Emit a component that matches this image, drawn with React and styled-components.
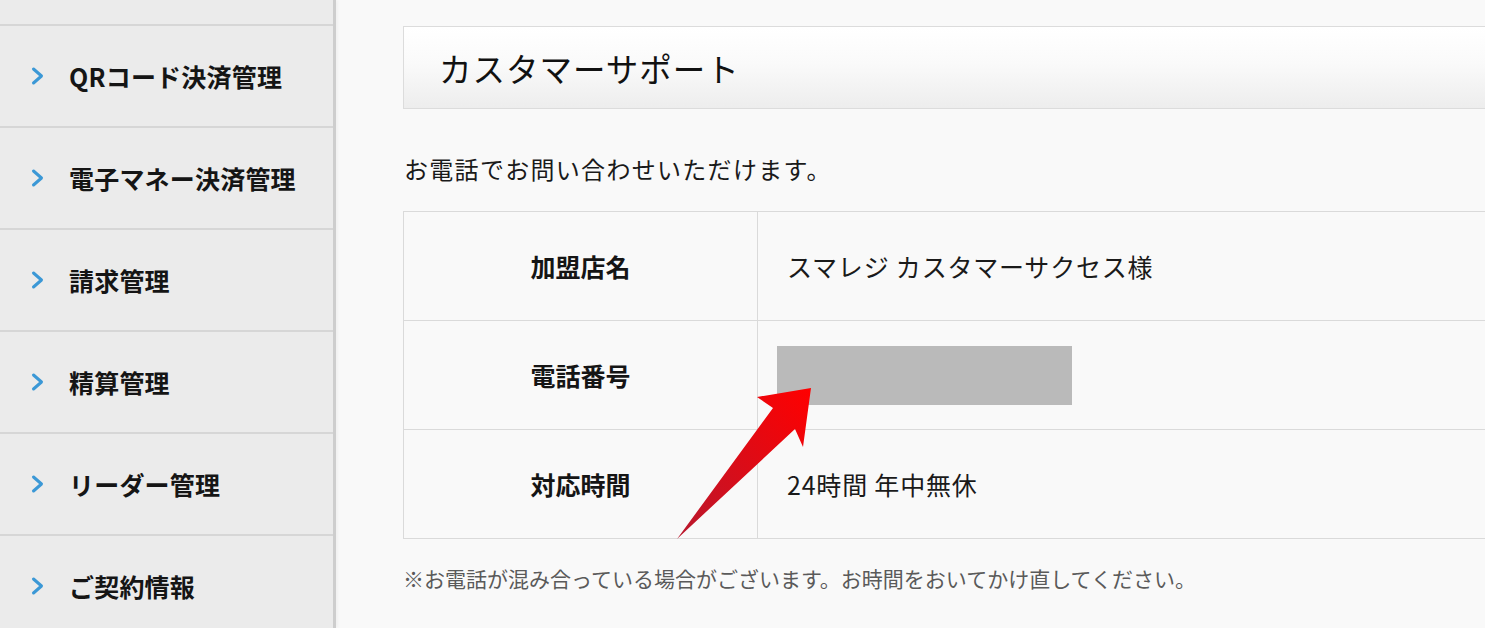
import { createGlobalStyle, styled } from 'styled-components'

const menuItems = [
    'QRコード決済管理',
    '電子マネー決済管理',
    '請求管理',
    '精算管理',
    'リーダー管理',
    'ご契約情報',
]

const rows = [
    { label: '加盟店名', value: 'スマレジ カスタマーサクセス様' },
    { label: '電話番号', masked: true },
    { label: '対応時間', value: '24時間 年中無休' },
]

const App = () => {
    return (
        <>
            <GlobalStyle />
            <PageLayout>
                <Sidebar>
                    <MenuList>
                        {
                            menuItems.map((item) =>
                                <MenuItem key={item}>
                                    <Chevron viewBox="0 0 14 20">
                                        <polyline points="3,3 11,10 3,17" />
                                    </Chevron>
                                    <MenuLabel>{item}</MenuLabel>
                                </MenuItem>
                            )
                        }
                    </MenuList>
                </Sidebar>

                <MainLayout>
                    <TitleBar>
                        <Title>カスタマーサポート</Title>
                    </TitleBar>

                    <Lead>お電話でお問い合わせいただけます。</Lead>

                    <InfoTable>
                        <tbody>
                            {
                                rows.map((row) =>
                                    <tr key={row.label}>
                                        <LabelCell>{row.label}</LabelCell>
                                        <ValueCell $masked={row.masked}>
                                            {row.masked ? <MaskedBox /> : row.value}
                                        </ValueCell>
                                    </tr>
                                )
                            }
                        </tbody>
                    </InfoTable>

                    <Note>※お電話が混み合っている場合がございます。お時間をおいてかけ直してください。</Note>
                </MainLayout>

                <PointerArrow viewBox="0 0 150 165">
                    <defs>
                        <linearGradient id="arrowFill" x1="0" y1="1" x2="1" y2="0">
                            <stop offset="0" stopColor="#b8182e" />
                            <stop offset="1" stopColor="#ff0000" />
                        </linearGradient>
                    </defs>
                    <polygon
                        points="141,8 87,17 103,28 7,159 125,49 133,67"
                        fill="url(#arrowFill)"
                    />
                </PointerArrow>
            </PageLayout>
        </>
    )
}

// Global

const GlobalStyle = createGlobalStyle`
      html, body {
        margin: 0;
        padding: 0;
        height: 100%;
        overflow: hidden;
        background: #f9f9f9;
      }
      body {
        font-family: "Noto Sans CJK JP", "Noto Sans", sans-serif;
        color: #111;
      }
    `

// Layouts

const PageLayout = styled.div`
      position: relative;
      display: flex;
      width: 1485px;
      height: 628px;
      overflow: hidden;
    `

const Sidebar = styled.nav`
      flex: 0 0 333px;
      background: #ebebeb;
      border-right: 3px solid #cdcdcd;
      box-shadow: 2px 0 3px rgba(0, 0, 0, .04);
      padding-top: 24px;
      overflow: hidden;
    `

const MainLayout = styled.main`
      flex: 0 0 auto;
      width: 1120px;
      padding-left: 67px;
      padding-top: 26px;
      display: flex;
      flex-direction: column;
    `

// Components

const MenuList = styled.ul`
      list-style: none;
      margin: 0;
      padding: 0;
    `

const MenuItem = styled.li`
      height: 100px;
      border-top: 2px solid #d6d6d6;
      display: flex;
      align-items: center;
      padding-left: 30px;
      gap: 24px;
    `

const Chevron = styled.svg`
      width: 15px;
      height: 20px;
      fill: none;
      stroke: #3b98d6;
      stroke-width: 3;
      stroke-linecap: round;
      stroke-linejoin: round;
    `

const MenuLabel = styled.span`
      font-size: 25px;
      font-weight: 700;
      color: #151515;
      letter-spacing: .2px;
    `

const TitleBar = styled.div`
      height: 81px;
      border: 1.5px solid #dcdcdc;
      border-right: none;
      background: linear-gradient(#ffffff 0%, #fafafa 45%, #ededed 100%);
      display: flex;
      align-items: center;
      padding-left: 35px;
    `

const Title = styled.h1`
      margin: 0;
      font-size: 32.5px;
      font-weight: 400;
      letter-spacing: 1px;
      color: #111;
    `

const Lead = styled.p`
      margin: 44px 0 26px 1px;
      font-size: 24px;
      letter-spacing: 1.3px;
      line-height: 32px;
      color: #1a1a1a;
    `

const InfoTable = styled.table`
      border-collapse: collapse;
      width: 100%;
      border-left: 1.5px solid #dadada;

      td {
        border-top: 1.5px solid #dadada;
        border-bottom: 1.5px solid #dadada;
        height: 108px;
        padding: 0;
        font-size: 25px;
      }
    `

const LabelCell = styled.td`
      width: 353px;
      text-align: center;
      font-weight: 700;
      border-right: 1.5px solid #dadada;
      color: #151515;
    `

const ValueCell = styled.td`
      && {
        padding-left: ${({ $masked }) => $masked ? '19px' : '29px'};
      }
      letter-spacing: .8px;
      color: #1a1a1a;
    `

const MaskedBox = styled.div`
      width: 295px;
      height: 59px;
      background: #bababa;
    `

const Note = styled.p`
      margin: 24px 0 0 0;
      font-size: 21px;
      color: #5a5a5a;
    `

const PointerArrow = styled.svg`
      position: absolute;
      left: 670px;
      top: 380px;
      width: 150px;
      height: 165px;
    `

export default App
